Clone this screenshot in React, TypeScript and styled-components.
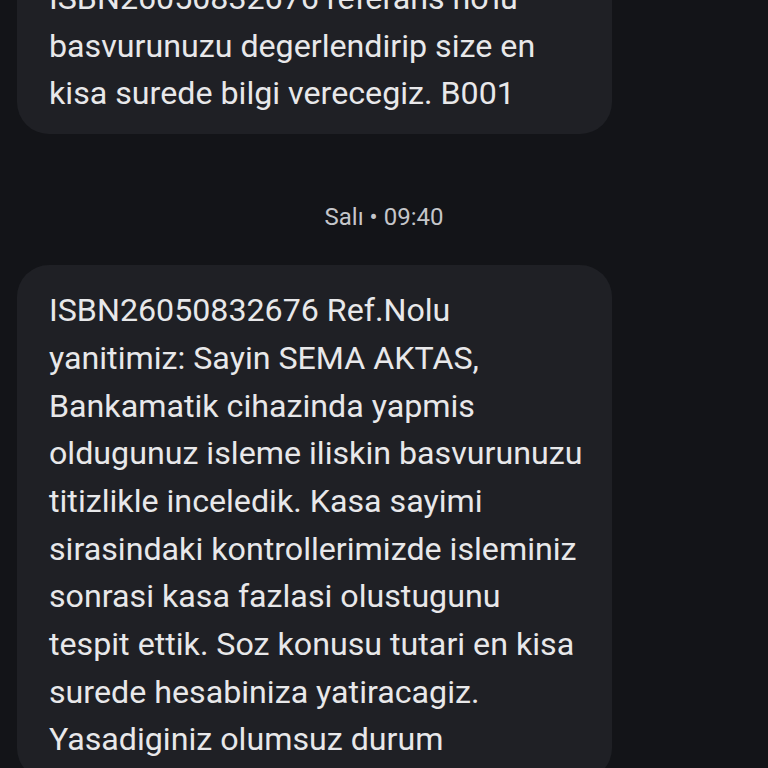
import React from "react";
import styled, { createGlobalStyle } from "styled-components";

const Global = createGlobalStyle`
  html, body { margin: 0; padding: 0; background: #131418; }
  body { width: 768px; height: 768px; overflow: hidden; }
  #root { width: 768px; height: 768px; overflow: hidden; }
`;

const Screen = styled.div`
  width: 768px;
  height: 768px;
  overflow: hidden;
  background: #131418;
  font-family: Roboto, "Noto Sans", sans-serif;
`;

const Thread = styled.div`
  display: flex;
  flex-direction: column;
  margin-top: -45px;
  padding: 0 156px 0 17px;
`;

const Bubble = styled.div<{ $pt: number; $pb: number }>`
  background: #1f2025;
  border-radius: 32px;
  padding: ${(p) => p.$pt}px 16px ${(p) => p.$pb}px 32px;
  color: #e8e8ea;
  font-size: 32.2px;
  line-height: 47.7px;
  letter-spacing: 0px;
  white-space: nowrap;
`;

const Stamp = styled.div`
  height: 131px;
  display: flex;
  align-items: center;
  justify-content: center;
  margin-right: -139px;
  padding-top: 35px;
  box-sizing: border-box;
  color: #c5c6ca;
  font-size: 24px;
  letter-spacing: 0px;
`;

const Line = styled.div``;

const first = [
  "ISBN26050832676 referans no'lu",
  "basvurunuzu degerlendirip size en",
  "kisa surede bilgi verecegiz. B001",
];

const second = [
  "ISBN26050832676 Ref.Nolu",
  "yanitimiz: Sayin SEMA AKTAS,",
  "Bankamatik cihazinda yapmis",
  "oldugunuz isleme iliskin basvurunuzu",
  "titizlikle inceledik. Kasa sayimi",
  "sirasindaki kontrollerimizde isleminiz",
  "sonrasi kasa fazlasi olustugunu",
  "tespit ettik. Soz konusu tutari en kisa",
  "surede hesabiniza yatiracagiz.",
  "Yasadiginiz olumsuz durum",
];

export default function App() {
  return (
    <Screen>
      <Global />
      <Thread>
        <Bubble $pt={20} $pb={16}>
          {first.map((l) => (
            <Line key={l}>{l}</Line>
          ))}
        </Bubble>
        <Stamp>Salı • 09:40</Stamp>
        <Bubble $pt={22} $pb={16}>
          {second.map((l) => (
            <Line key={l}>{l}</Line>
          ))}
        </Bubble>
      </Thread>
    </Screen>
  );
}
